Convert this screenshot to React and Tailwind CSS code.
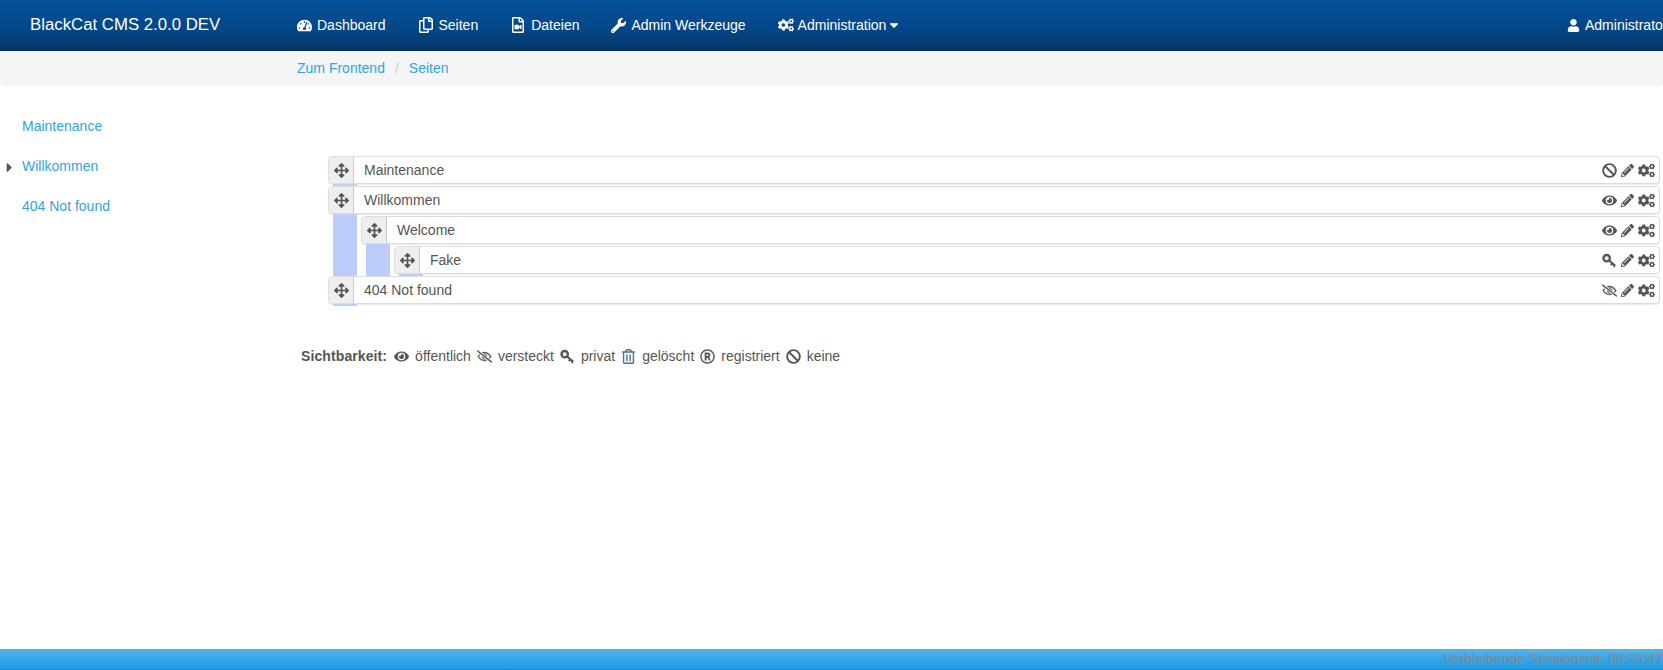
import React from 'react';
import {
  FaTachometerAlt, FaRegCopy, FaRegFileVideo, FaWrench, FaCogs, FaCaretDown, FaCaretRight, FaUser,
  FaArrowsAlt, FaBan, FaEye, FaRegEyeSlash, FaPencilAlt, FaRegTrashAlt, FaRegRegistered,
} from 'react-icons/fa';

// FA4 style key: ring at top left, shaft to the lower right
const KeyIcon = ({ size = 14 }) => (
  <svg width={size} height={size} viewBox="0 0 16 16" fill="none" stroke="currentColor" className="shrink-0">
    <circle cx="5" cy="5.5" r="3.4" strokeWidth="2.5" />
    <path d="M7.5 8l6.5 5.5M11 11l-1.5 2M13.5 13l-1 1.8" strokeWidth="2.2" />
  </svg>
);

const SlashIcon = ({ size = 15 }) => <FaRegEyeSlash size={size} strokeWidth={14} className="shrink-0" />;

const navItems = [
  { label: 'Dashboard', icon: FaTachometerAlt, size: 15, gap: 'gap-[5px]' },
  { label: 'Seiten', icon: FaRegCopy, size: 16, gap: 'gap-[5px]' },
  { label: 'Dateien', icon: FaRegFileVideo, size: 16, gap: 'gap-[5px]' },
  { label: 'Admin Werkzeuge', icon: FaWrench, size: 15, gap: 'gap-[5px]' },
  { label: 'Administration', icon: FaCogs, size: 16, gap: 'gap-[4px]', caret: true },
];

const tree = [
  { label: 'Maintenance', status: FaBan },
  {
    label: 'Willkommen',
    status: FaEye,
    children: [
      {
        label: 'Welcome',
        status: FaEye,
        children: [{ label: 'Fake', status: KeyIcon }],
      },
    ],
  },
  { label: '404 Not found', status: SlashIcon },
];

const legend = [
  { label: 'öffentlich', icon: FaEye },
  { label: 'versteckt', icon: SlashIcon },
  { label: 'privat', icon: KeyIcon },
  { label: 'gelöscht', icon: FaRegTrashAlt, trash: true },
  { label: 'registriert', icon: FaRegRegistered },
  { label: 'keine', icon: FaBan },
];

const PageNode = ({ node }) => {
  const Status = node.status;
  return (
    <li>
      <div className="flex h-[28px] rounded border border-[#ddd] bg-white shadow-[0_1px_1px_rgba(0,0,0,0.08)]">
        <div className="flex w-[25px] shrink-0 items-center justify-center rounded-l border-r border-[#ccc] bg-[#eee] text-[#555]">
          <FaArrowsAlt size={15} />
        </div>
        <span className="flex-1 pl-[10px] leading-[26px]">{node.label}</span>
        <div className="flex items-center gap-[4px] pr-[4px] text-[#555]">
          <Status size={15} />
          <FaPencilAlt size={13} />
          <FaCogs size={17} />
        </div>
      </div>
      <div className="flex min-h-[2px]">
        <div className="ml-[5px] w-[24px] shrink-0 bg-[#bccdfb]" />
        {node.children && (
          <ul className="ml-[4px] flex-1 pt-[2px]">
            {node.children.map((child) => (
              <PageNode key={child.label} node={child} />
            ))}
          </ul>
        )}
      </div>
    </li>
  );
};

export default function App() {
  return (
    <div className="flex h-screen flex-col overflow-hidden bg-white font-['Liberation_Sans',Arial,sans-serif] text-[14px] text-[#555]">
      {/* Navbar */}
      <header className="flex h-[51px] shrink-0 items-center border-b border-[#022f5a] bg-linear-to-b from-[#04519b] via-[#044687] via-60% to-[#033769] text-white">
        <div className="w-[297px] shrink-0 pl-[30px] text-[16.8px]">BlackCat CMS 2.0.0 DEV</div>
        <nav className="flex flex-1 items-center gap-[32px]">
          {navItems.map(({ label, icon: Icon, size, gap, caret }) => (
            <a key={label} href="#" className={`flex items-center ${gap}`}>
              <Icon size={size} />
              <span>{label}</span>
              {caret && <FaCaretDown size={14} className="-ml-[3px]" />}
            </a>
          ))}
        </nav>
        <div className="flex w-[96px] shrink-0 items-center gap-[5px] whitespace-nowrap">
          <FaUser size={13} className="shrink-0" />
          <span className="shrink-0">Administrator</span>
        </div>
      </header>

      {/* Breadcrumb */}
      <div className="flex h-[35px] shrink-0 items-center rounded-b bg-[#f5f5f5] pl-[297px] text-[#2fa4e7]">
        <a href="#">Zum Frontend</a>
        <span className="px-[10px] text-[#ccc]">/</span>
        <a href="#">Seiten</a>
      </div>

      <div className="flex min-h-0 flex-1">
        {/* Sidebar */}
        <aside className="w-[297px] shrink-0 pt-[20px] text-[#2fa4e7]">
          {tree.map((page) => (
            <div key={page.label} className="relative flex h-[40px] items-center pl-[22px]">
              {page.children && <FaCaretRight size={15} className="absolute left-[2px] top-[14px] text-[#555]" />}
              <a href="#">{page.label}</a>
            </div>
          ))}
        </aside>

        {/* Page tree */}
        <main className="min-w-0 flex-1 pr-[3px] pt-[70px]">
          <ul className="ml-[31px]">
            {tree.map((page) => (
              <PageNode key={page.label} node={page} />
            ))}
          </ul>
          <div className="ml-[4px] mt-[40px] flex items-center">
            <b className="mr-[7px] tracking-[0.1px]">Sichtbarkeit:</b>
            {legend.map(({ label, icon: Icon, trash }) => (
              <span key={label} className="mr-[6px] flex items-center gap-[6px]">
                <Icon size={15} className={trash ? 'text-[#4f7396]' : ''} />
                {label}
              </span>
            ))}
          </div>
        </main>
      </div>

      {/* Footer */}
      <footer className="h-[21px] shrink-0 whitespace-nowrap border-b border-[#178acc] bg-linear-to-b from-[#54b4eb] via-[#2fa4e7] via-60% to-[#1d9ce5] text-right leading-[20px] text-[#888]">
        Verbleibende Sessionzeit: 00:23:47
      </footer>
    </div>
  );
}
